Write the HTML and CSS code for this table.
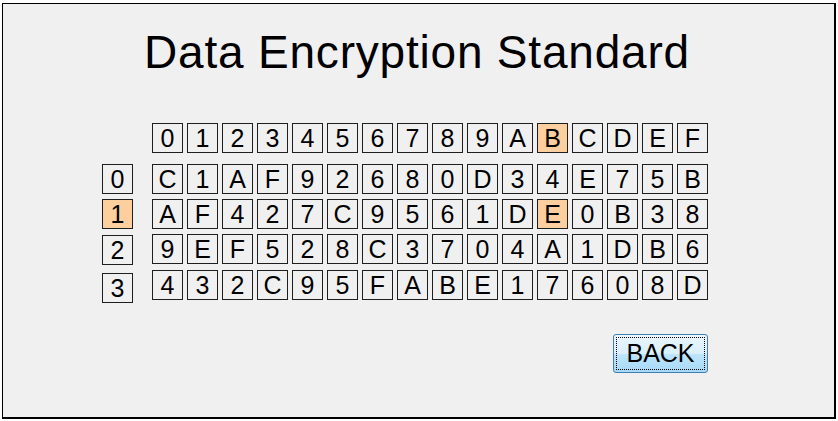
FILE: index.html
```html
<!DOCTYPE html>
<html>
<head>
<meta charset="utf-8">
<link rel="stylesheet" href="styles.css">
</head>
<body>
<div class="frame">
  <h1 class="title">Data Encryption Standard</h1>
  <div class="table">
    <div class="row head">
      <span class="label blank"></span>
      <span class="cell">0</span><span class="cell">1</span><span class="cell">2</span><span class="cell">3</span><span class="cell">4</span><span class="cell">5</span><span class="cell">6</span><span class="cell">7</span><span class="cell">8</span><span class="cell">9</span><span class="cell">A</span><span class="cell hl">B</span><span class="cell">C</span><span class="cell">D</span><span class="cell">E</span><span class="cell">F</span>
    </div>
    <div class="row">
      <span class="label">0</span>
      <span class="cell">C</span><span class="cell">1</span><span class="cell">A</span><span class="cell">F</span><span class="cell">9</span><span class="cell">2</span><span class="cell">6</span><span class="cell">8</span><span class="cell">0</span><span class="cell">D</span><span class="cell">3</span><span class="cell">4</span><span class="cell">E</span><span class="cell">7</span><span class="cell">5</span><span class="cell">B</span>
    </div>
    <div class="row">
      <span class="label hl">1</span>
      <span class="cell">A</span><span class="cell">F</span><span class="cell">4</span><span class="cell">2</span><span class="cell">7</span><span class="cell">C</span><span class="cell">9</span><span class="cell">5</span><span class="cell">6</span><span class="cell">1</span><span class="cell">D</span><span class="cell hl">E</span><span class="cell">0</span><span class="cell">B</span><span class="cell">3</span><span class="cell">8</span>
    </div>
    <div class="row">
      <span class="label low1">2</span>
      <span class="cell">9</span><span class="cell">E</span><span class="cell">F</span><span class="cell">5</span><span class="cell">2</span><span class="cell">8</span><span class="cell">C</span><span class="cell">3</span><span class="cell">7</span><span class="cell">0</span><span class="cell">4</span><span class="cell">A</span><span class="cell">1</span><span class="cell">D</span><span class="cell">B</span><span class="cell">6</span>
    </div>
    <div class="row">
      <span class="label low3">3</span>
      <span class="cell">4</span><span class="cell">3</span><span class="cell">2</span><span class="cell">C</span><span class="cell">9</span><span class="cell">5</span><span class="cell">F</span><span class="cell">A</span><span class="cell">B</span><span class="cell">E</span><span class="cell">1</span><span class="cell">7</span><span class="cell">6</span><span class="cell">0</span><span class="cell">8</span><span class="cell">D</span>
    </div>
  </div>
  <div class="actions">
    <button class="back"><span class="focus">BACK</span></button>
  </div>
</div>
</body>
</html>
```

FILE: styles.css
```css
html, body {
  margin: 0;
  padding: 0;
  background: #ffffff;
}
body {
  width: 838px;
  height: 421px;
  overflow: hidden;
  font-family: "Liberation Sans", Arial, sans-serif;
}
.frame {
  box-sizing: border-box;
  margin: 3px 0 0 2px;
  width: 834px;
  height: 416px;
  background: #f0f0f0;
  border-style: solid;
  border-color: #000;
  border-width: 1px 2px 2px 1px;
  display: flex;
  flex-direction: column;
}
.title {
  margin: 25px 0 0 0;
  font-weight: normal;
  font-size: 46px;
  letter-spacing: 0.8px;
  line-height: 46px;
  height: 46px;
  text-align: center;
  color: #000;
  padding-right: 3px;
}
.table {
  margin: 48px 0 0 99px;
  display: flex;
  flex-direction: column;
  gap: 5px;
}
.row {
  display: flex;
  gap: 4px;
  align-items: flex-start;
}
.row.head {
  margin-bottom: 6px;
}
.cell, .label {
  box-sizing: border-box;
  width: 31px;
  height: 30px;
  border: 1px solid #1e1e1e;
  display: flex;
  align-items: center;
  justify-content: center;
  font-size: 25px;
  line-height: 1;
  color: #000;
  background: #f0f0f0;
}
.label {
  margin-right: 15px;
}
.label.blank {
  border-color: transparent;
}
.label.low1 { margin-top: 1px; }
.label.low3 { margin-top: 3px; }
.hl {
  background: #fdcf9e;
}
.actions {
  margin: 31px 0 0 0;
  width: 705px;
  display: flex;
  justify-content: flex-end;
}
.back {
  box-sizing: border-box;
  width: 95px;
  height: 39px;
  padding: 2px;
  border: 1px solid #3c7fb1;
  border-radius: 3px;
  background: linear-gradient(to bottom, #eaf6fd 0%, #d9f0fc 50%, #bee6fd 51%, #a7d9f5 100%);
  font-family: "Liberation Sans", Arial, sans-serif;
  font-size: 25px;
  color: #000;
  display: flex;
}
.focus {
  flex: 1;
  border: 1px dotted #000;
  display: flex;
  align-items: center;
  justify-content: center;
  line-height: 1;
}
```
